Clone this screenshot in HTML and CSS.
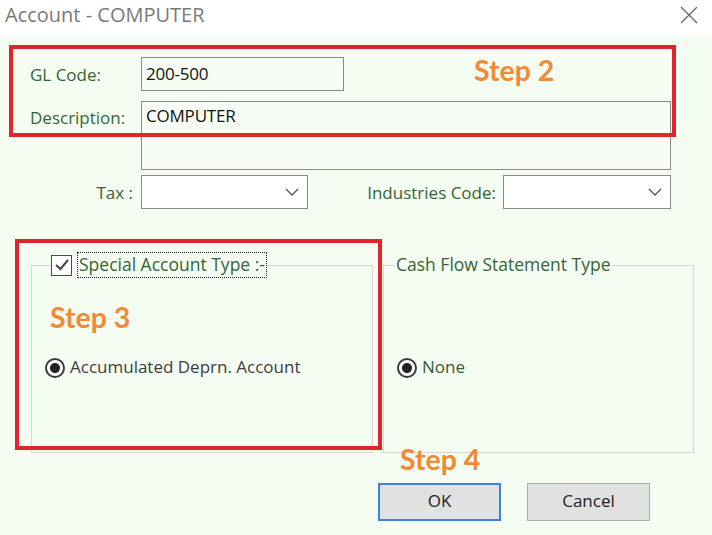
FILE: index.html
```html
<!DOCTYPE html>
<html>
<head>
<meta charset="utf-8">
<link rel="stylesheet" href="styles.css">
</head>
<body>
<div class="window">
  <div class="titlebar">
    <span class="title">Account - COMPUTER</span>
    <svg class="close" width="18" height="18" viewBox="0 0 18 18"><path d="M1 1 L17 17 M17 1 L1 17" stroke="#666" stroke-width="1.3" fill="none"/></svg>
  </div>
  <div class="content">
    <div class="row r1">
      <span class="lbl">GL Code:</span>
      <div class="field code">200-500</div>
    </div>
    <div class="row r2">
      <span class="lbl">Description:</span>
      <div class="field desc">COMPUTER</div>
    </div>
    <div class="row r3">
      <span class="lbl right">Tax :</span>
      <div class="field select tax"><svg class="chev" width="14" height="8" viewBox="0 0 14 8"><path d="M1 1 L7 7 L13 1" stroke="#555" stroke-width="1.4" fill="none"/></svg></div>
      <span class="lbl ind">Industries Code:</span>
      <div class="field select indsel"><svg class="chev" width="14" height="8" viewBox="0 0 14 8"><path d="M1 1 L7 7 L13 1" stroke="#555" stroke-width="1.4" fill="none"/></svg></div>
    </div>
    <div class="groups">
      <div class="group left">
        <div class="legend chk">
          <span class="checkbox"><svg width="18" height="18" viewBox="0 0 18 18"><path d="M3 9 L7.5 13 L15 4" stroke="#444" stroke-width="2" fill="none"/></svg></span>
          <span class="focus">Special Account Type :-</span>
        </div>
        <div class="radio-row"><span class="radio"></span><span class="rlabel dark">Accumulated Deprn. Account</span></div>
      </div>
      <div class="group right">
        <div class="legend txt">Cash Flow Statement Type</div>
        <div class="radio-row"><span class="radio"></span><span class="rlabel green">None</span></div>
      </div>
    </div>
    <div class="buttons">
      <div class="btn ok">OK</div>
      <div class="btn">Cancel</div>
    </div>

    <div class="redbox box2"></div>
    <div class="redbox box3"></div>
    <div class="step s2">Step 2</div>
    <div class="step s3">Step 3</div>
    <div class="step s4">Step 4</div>
  </div>
</div>
</body>
</html>
```

FILE: styles.css
```css
html, body {
  margin: 0;
  padding: 0;
}
body {
  width: 712px;
  height: 535px;
  overflow: hidden;
  background: #f5fcf2;
  font-family: "Open Sans", "Noto Sans", sans-serif;
  font-size: 17px;
}
.window {
  width: 712px;
  height: 535px;
  display: flex;
  flex-direction: column;
}
.titlebar {
  height: 36px;
  background: #ffffff;
  display: flex;
  align-items: center;
  justify-content: space-between;
  padding: 0 14px 0 5px;
  box-sizing: border-box;
}
.title {
  font-size: 20px;
  color: #7a7a7a;
  margin-top: -7px;
}
.close {
  margin-top: -6px;
}
.content {
  position: relative;
  flex: 1;
  padding: 21px 0 0 30px;
  background: #f5fcf2;
}
.row {
  display: flex;
}
.lbl {
  width: 111px;
  flex: none;
  color: #356535;
  font-size: 17px;
}
.r1 {
  height: 34px;
  align-items: center;
}
.r2 {
  margin-top: 10px;
}
.r2 .lbl {
  padding-top: 5px;
}
.r3 {
  margin-top: 5px;
  height: 34px;
  align-items: center;
}
.lbl.right {
  text-align: right;
  padding-right: 8px;
  box-sizing: border-box;
}
.lbl.ind {
  width: 195px;
  text-align: right;
  padding-right: 7px;
  box-sizing: border-box;
}
.field {
  box-sizing: border-box;
  border: 1.5px solid #8a8a8a;
  background: #f7fdf5;
  color: #111;
  padding-left: 4px;
  font-size: 17px;
  letter-spacing: -0.2px;
}
.code {
  width: 203px;
  height: 34px;
  line-height: 31px;
}
.desc {
  width: 530px;
  height: 69px;
  padding-top: 3px;
  line-height: 22px;
}
.select {
  height: 34px;
  background: #ffffff;
  display: flex;
  align-items: center;
  justify-content: flex-end;
  padding-right: 8px;
}
.tax {
  width: 167px;
}
.indsel {
  width: 168px;
}
.groups {
  display: flex;
  gap: 10px;
  margin-top: 56px;
  margin-left: 1px;
}
.group {
  position: relative;
  box-sizing: border-box;
  height: 188px;
  border: 1px solid #d4d8d2;
  padding: 92px 0 0 13px;
}
.group.left {
  width: 342px;
}
.group.right {
  width: 311px;
}
.legend {
  position: absolute;
  background: #f5fcf2;
  display: flex;
  align-items: center;
}
.legend.chk {
  top: -14px;
  left: 19px;
}
.legend.txt {
  top: -14px;
  left: 11px;
  padding: 0 1px;
  color: #356535;
  font-size: 17.5px;
}
.checkbox {
  width: 21px;
  height: 21px;
  box-sizing: border-box;
  border: 1.5px solid #4a4a4a;
  background: #ffffff;
  display: flex;
  align-items: center;
  justify-content: center;
}
.focus {
  margin-left: 5px;
  border: 1px dotted #222;
  padding: 0 1px;
  height: 24px;
  line-height: 22px;
  color: #356535;
  font-size: 17.5px;
}
.radio-row {
  display: flex;
  align-items: center;
  height: 20px;
}
.radio {
  width: 20px;
  height: 20px;
  box-sizing: border-box;
  border-radius: 50%;
  border: 2px solid #3a3a3a;
  background: radial-gradient(circle, #222 0 4.5px, #ffffff 5.5px);
  flex: none;
}
.rlabel {
  margin-left: 5px;
  margin-top: -3px;
}
.dark {
  color: #3c3c3c;
}
.green {
  color: #2f5c3a;
}
.buttons {
  display: flex;
  gap: 26px;
  margin: 30px 0 0 348px;
}
.btn {
  width: 123px;
  height: 38px;
  box-sizing: border-box;
  border: 1px solid #adadad;
  background: #e1e1e1;
  color: #222;
  display: flex;
  align-items: center;
  justify-content: center;
  padding-bottom: 3px;
}
.btn.ok {
  border: 2px solid #3d82d8;
}
.redbox {
  position: absolute;
  box-sizing: border-box;
  border: 4.5px solid #e0262b;
}
.box2 {
  left: 9px;
  top: 9px;
  width: 667px;
  height: 92px;
}
.box3 {
  left: 15px;
  top: 203px;
  width: 367px;
  height: 211px;
}
.step {
  position: absolute;
  font-family: "Lato", "Open Sans", sans-serif;
  font-weight: 700;
  font-size: 28.5px;
  color: #f08a35;
  line-height: 1;
}
.s2 {
  left: 474px;
  top: 20px;
}
.s3 {
  left: 50px;
  top: 267px;
}
.s4 {
  left: 400px;
  top: 409px;
}
```
